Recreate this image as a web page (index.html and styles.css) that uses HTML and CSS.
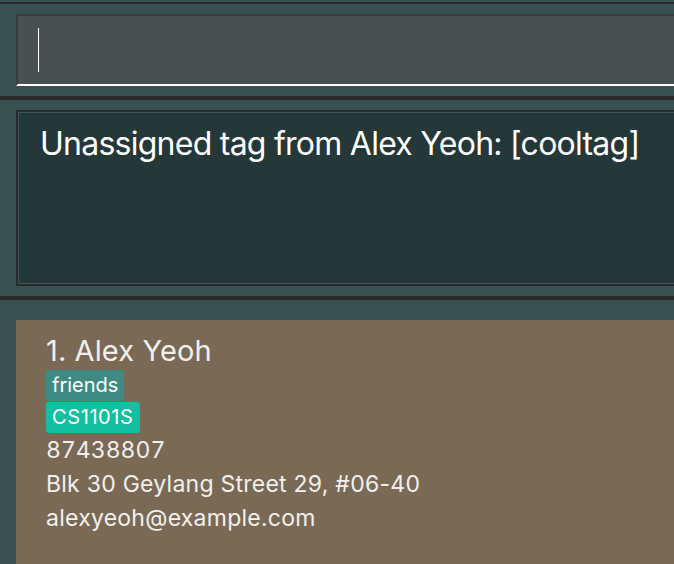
FILE: index.html
```html
<!DOCTYPE html>
<html lang="en">
<head>
<meta charset="utf-8">
<title>Address Book</title>
<link rel="stylesheet" href="styles.css">
</head>
<body>
<div class="app">
  <div class="topline"></div>
  <section class="command">
    <div class="field"><span class="caret"></span></div>
  </section>
  <div class="sep"></div>
  <section class="result">
    <div class="result-box">
      <p class="result-text">Unassigned tag from Alex Yeoh: [cooltag]</p>
    </div>
  </section>
  <div class="sep"></div>
  <section class="list">
    <div class="card">
      <div class="name">1. Alex Yeoh</div>
      <div class="tags">
        <span class="tag tag-friends">friends</span>
        <span class="tag tag-module">CS1101S</span>
      </div>
      <div class="detail phone">87438807</div>
      <div class="detail">Blk 30 Geylang Street 29, #06-40</div>
      <div class="detail">alexyeoh@example.com</div>
    </div>
  </section>
</div>
</body>
</html>
```

FILE: styles.css
```css
html, body {
  margin: 0;
  padding: 0;
  height: 100%;
  overflow: hidden;
  background: #385050;
  font-family: Inter, "Noto Sans", sans-serif;
  color: #ffffff;
}

.app {
  display: flex;
  flex-direction: column;
  height: 100%;
}

.topline {
  height: 2px;
  border-bottom: 2px solid #2a2a2a;
}

.command {
  padding: 10px 0 10px 16px;
}

.field {
  box-sizing: border-box;
  height: 72px;
  margin-right: -20px;
  background: #485052;
  border-top: 2px solid #3a3a3a;
  border-left: 2px solid #3a3a3a;
  border-bottom: 2px solid #ffffff;
  padding: 12px 0 0 20px;
}

.caret {
  display: block;
  width: 1px;
  height: 44px;
  background: #ffffff;
}

.sep {
  height: 4px;
  background: #2a2a2a;
}

.result {
  padding: 10px 0 10px 16px;
}

.result-box {
  box-sizing: border-box;
  height: 176px;
  margin-right: -20px;
  border: 2px solid #2a2a2a;
  background: #243739;
  box-shadow: inset 0 0 0 1px #3d5656;
  padding: 14px 0 0 22px;
}

.result-text {
  margin: 0;
  font-size: 32px;
  line-height: 36px;
  letter-spacing: -0.75px;
  color: #ffffff;
}

.list {
  flex: 1;
  padding: 20px 0 0 16px;
  display: flex;
}

.card {
  flex: 1;
  background: #7a6955;
  padding: 13px 0 0 30px;
  color: #f2f0ee;
}

.name {
  font-size: 29px;
  line-height: 36px;
  letter-spacing: 0.1px;
}

.tags {
  display: flex;
  flex-direction: column;
  align-items: flex-start;
  gap: 1px;
  margin-top: 1px;
}

.tag {
  font-size: 20px;
  line-height: 31px;
  padding: 0 6px;
  border-radius: 3px;
  color: #ffffff;
}

.tag-friends {
  background: #3f8a82;
}

.tag-module {
  background: #12bfa0;
  letter-spacing: 0.6px;
}

.detail {
  font-size: 23px;
  line-height: 34px;
  letter-spacing: 0.25px;
}

.phone {
  font-variant-numeric: tabular-nums;
  letter-spacing: 0;
}
```
